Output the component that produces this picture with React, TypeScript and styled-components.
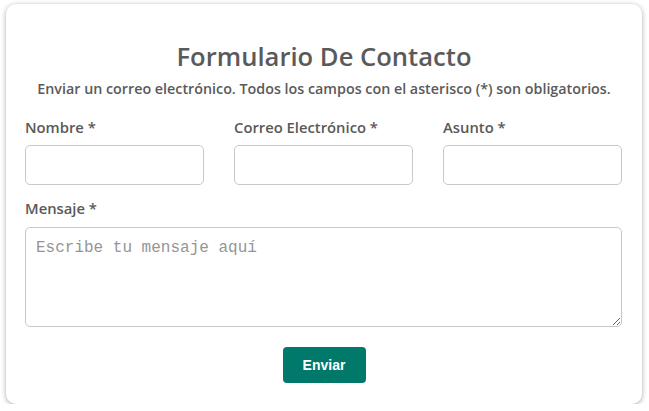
import * as React from "react"
import styled, { createGlobalStyle } from "styled-components"

const GlobalStyle = createGlobalStyle`
  html, body {
    margin: 0;
    padding: 0;
    background: #ffffff;
  }
  body {
    font-family: "Open Sans", "DejaVu Sans", sans-serif;
  }
`

const Card = styled.form`
  box-sizing: border-box;
  width: 636px;
  height: 400px;
  margin: 4px 0 0 6px;
  padding: 36px 19px 0 19px;
  background: #ffffff;
  border-radius: 10px;
  box-shadow: 0 1px 5px rgba(0, 0, 0, 0.35);
  display: flex;
  flex-direction: column;
`

const Title = styled.h2`
  margin: 0;
  text-align: center;
  font-size: 25.6px;
  font-weight: 600;
  line-height: 34px;
  color: #5a5a5a;
`

const Subtitle = styled.p`
  margin: 6px 0 0 0;
  text-align: center;
  font-size: 14.3px;
  font-weight: 600;
  line-height: 18px;
  color: #5a5a5a;
`

const FieldRow = styled.div`
  display: grid;
  grid-template-columns: repeat(3, 179px);
  column-gap: 30px;
  margin-top: 19px;
`

const Field = styled.div`
  display: flex;
  flex-direction: column;
`

const Label = styled.label`
  font-size: 14.8px;
  font-weight: 600;
  line-height: 20px;
  color: #595959;
  margin-bottom: 8px;
`

const MessageField = styled(Field)`
  margin-top: 13px;
`

const TextInput = styled.input`
  box-sizing: border-box;
  width: 100%;
  height: 40px;
  border: 1px solid #c8c8c8;
  border-radius: 5px;
  padding: 0 10px;
  font-size: 14px;
  outline: none;
`

const TextArea = styled.textarea`
  box-sizing: border-box;
  width: 597px;
  height: 100px;
  margin-top: 1px;
  border: 1px solid #c8c8c8;
  border-radius: 5px;
  padding: 10px;
  font-family: "Liberation Mono", "Courier New", monospace;
  font-size: 16px;
  line-height: 20px;
  outline: none;
  &::placeholder {
    color: #959595;
  }
`

const Actions = styled.div`
  display: flex;
  justify-content: center;
  margin-top: 20px;
`

const SubmitButton = styled.button`
  width: 83px;
  height: 36px;
  border: none;
  border-radius: 4px;
  background: #00796b;
  color: #ffffff;
  font-family: "Liberation Sans", Arial, sans-serif;
  font-size: 14px;
  font-weight: 700;
  cursor: pointer;
`

export default function App() {
  return (
    <>
      <GlobalStyle />
      <Card onSubmit={(e) => e.preventDefault()}>
        <Title>Formulario De Contacto</Title>
        <Subtitle>
          Enviar un correo electrónico. Todos los campos con el asterisco (*) son obligatorios.
        </Subtitle>
        <FieldRow>
          <Field>
            <Label>Nombre *</Label>
            <TextInput type="text" />
          </Field>
          <Field>
            <Label>Correo Electrónico *</Label>
            <TextInput type="email" />
          </Field>
          <Field>
            <Label>Asunto *</Label>
            <TextInput type="text" />
          </Field>
        </FieldRow>
        <MessageField>
          <Label>Mensaje *</Label>
          <TextArea placeholder="Escribe tu mensaje aquí" />
        </MessageField>
        <Actions>
          <SubmitButton type="submit">Enviar</SubmitButton>
        </Actions>
      </Card>
    </>
  )
}
